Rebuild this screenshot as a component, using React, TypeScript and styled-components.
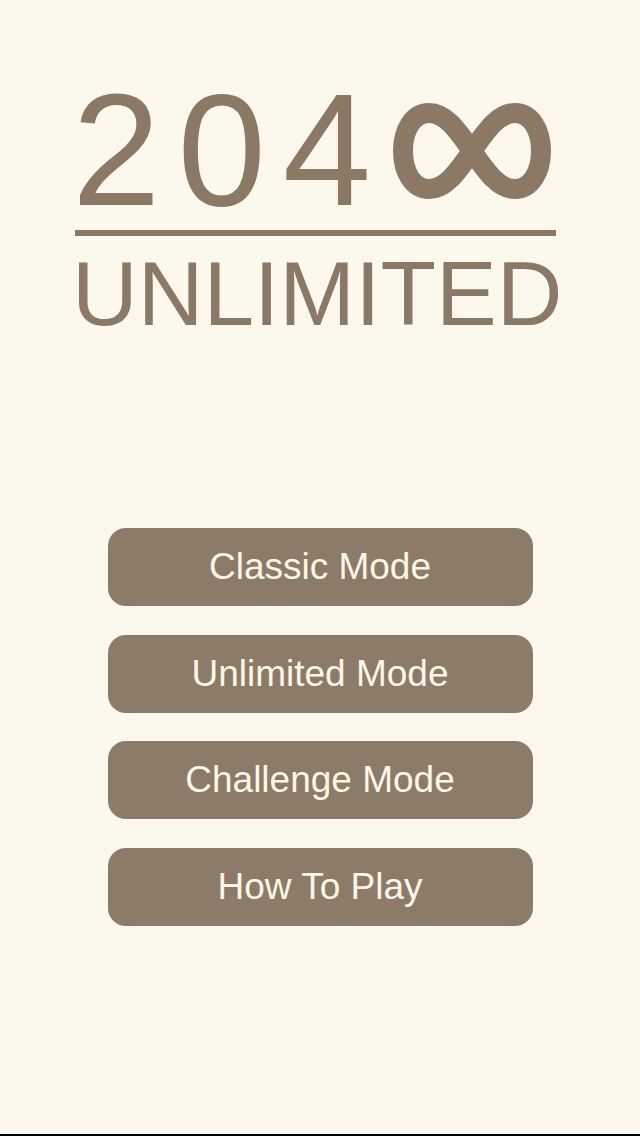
import styled, { createGlobalStyle } from 'styled-components';

const GlobalStyle = createGlobalStyle`
  html, body {
    margin: 0;
    padding: 0;
    background: #fcf8ee;
  }
  * { box-sizing: border-box; }
`;

const Screen = styled.div`
  min-height: 1136px;
  display: flex;
  flex-direction: column;
  font-family: 'Liberation Sans', Arial, sans-serif;
  color: #8b7966;
`;

const Logo = styled.div`
  width: 496px;
  margin: 71px auto 0;
  display: flex;
  flex-direction: column;
  align-items: flex-start;
`;

const NumberRow = styled.div`
  display: flex;
  align-items: flex-start;
  height: 159px;
`;

const Digits = styled.span`
  font-size: 159px;
  line-height: 1;
  letter-spacing: 17px;
`;

const Infinity = styled.svg`
  margin-top: 31px;
  margin-left: 5px;
`;

const Rule = styled.div`
  width: 481px;
  height: 6px;
  margin-left: 3px;
  background: #8b7966;
`;

const Subtitle = styled.div`
  margin-top: 12px;
  font-size: 91px;
  line-height: 1;
`;

const Menu = styled.nav`
  margin-top: 189px;
  display: flex;
  flex-direction: column;
  align-items: center;
  gap: 28.5px;
`;

const MenuButton = styled.button`
  width: 425px;
  height: 78px;
  border: none;
  border-radius: 18px;
  background: #8d7b69;
  color: #fdf6e6;
  font-family: 'Liberation Sans', Arial, sans-serif;
  font-size: 37px;
  line-height: 78px;
  padding: 0;
  cursor: pointer;
`;

const Spacer = styled.div`
  flex: 1;
`;

const BottomEdge = styled.div`
  height: 2px;
  background: #000;
`;

const items = ['Classic Mode', 'Unlimited Mode', 'Challenge Mode', 'How To Play'];

export default function App() {
  return (
    <>
      <GlobalStyle />
      <Screen>
        <Logo>
          <NumberRow>
            <Digits>204</Digits>
            <Infinity width='158' height='98' viewBox='0 0 158 98'>
              <path
                d='M79,49 C95,26 106,11 122,11 C138,11 148,28 148,49 C148,70 138,87 122,87 C106,87 95,72 79,49 C63,26 52,11 36,11 C20,11 10,28 10,49 C10,70 20,87 36,87 C52,87 63,72 79,49 Z'
                fill='none'
                stroke='#8b7966'
                strokeWidth='20'
              />
            </Infinity>
          </NumberRow>
          <Rule />
          <Subtitle>UNLIMITED</Subtitle>
        </Logo>
        <Menu>
          {items.map((label) => (
            <MenuButton key={label}>{label}</MenuButton>
          ))}
        </Menu>
        <Spacer />
        <BottomEdge />
      </Screen>
    </>
  );
}
